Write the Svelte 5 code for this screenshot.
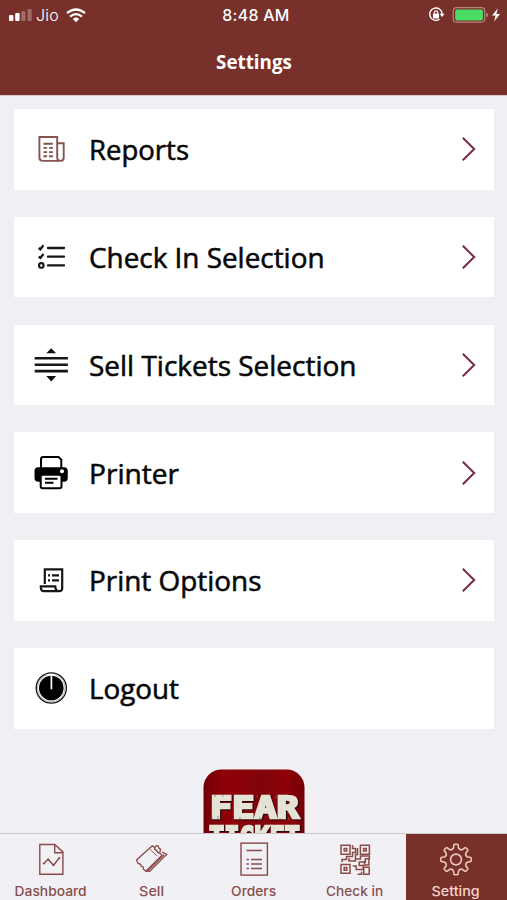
<script>
  const rows = ['Reports', 'Check In Selection', 'Sell Tickets Selection', 'Printer', 'Print Options', 'Logout'];
  const widths = [100, 235.5, 267.5, 90, 172.5, 90];
  const tabs = ['Dashboard', 'Sell', 'Orders', 'Check in', 'Setting'];
  const tabWidths = [72, 25, 45, 57, 48];

  // Eight rounded teeth around the hub of the settings gear
  const polar = (r, deg) => {
    const a = (deg * Math.PI) / 180;
    return `${(r * Math.sin(a)).toFixed(2)} ${(-r * Math.cos(a)).toFixed(2)}`;
  };
  let gear = '';
  for (let k = 0; k < 8; k++) {
    const a = k * 45;
    gear += `${k ? 'L' : 'M'}${polar(11.8, a - 12)}L${polar(14.6, a - 8.5)}Q${polar(15.3, a - 6)} ${polar(15.3, a - 4)}L${polar(15.3, a + 4)}Q${polar(15.3, a + 6)} ${polar(14.6, a + 8.5)}L${polar(11.8, a + 12)}Q${polar(9.8, a + 22.5)} ${polar(11.8, a + 33)}`;
  }
  gear += 'Z';
</script>

<main class="screen">
  <header>
    <div class="status">
      <div class="left">
        <svg class="signal" width="23" height="12" viewBox="0 0 23 12">
          <rect x="0" y="6" width="4.4" height="6" rx="1" fill="#fff" />
          <rect x="6.2" y="4" width="4.4" height="8" rx="1" fill="#fff" />
          <rect x="12.3" y="2" width="4.2" height="10" rx="1" fill="#a16b65" />
          <rect x="18.5" y="0" width="4.2" height="12" rx="1" fill="#a16b65" />
        </svg>
        <span class="carrier">Jio</span>
        <svg width="20" height="15" viewBox="0 0 20 15" fill="none" stroke="#fff" stroke-width="2.3">
          <path d="M1 5.2Q10-2.2 19 5.2" /><path d="M4 8.6Q10 3.6 16 8.6" /><path d="M6.8 11 10 14.2 13.2 11Q10 8.2 6.8 11Z" fill="#fff" stroke="none" />
        </svg>
      </div>
      <span class="time">8:48 AM</span>
      <svg class="right" width="76" height="20" viewBox="0 0 76 20">
        <path d="M12.5 14.2A6.2 6.2 0 1 1 15.1 9" fill="none" stroke="#fff" stroke-width="1.4" />
        <path d="M12.6 8.7h5l-2.5 3.4Z" fill="#fff" />
        <rect x="6" y="8.5" width="6" height="5" rx=".7" fill="#fff" /><path d="M7.2 9V7.7a1.8 1.8 0 0 1 3.6 0V9" fill="none" stroke="#fff" stroke-width="1.1" />
        <rect x="26.2" y="2.6" width="31.5" height="14.6" rx="3.2" fill="none" stroke="#b5827c" stroke-width="1.2" />
        <rect x="28.2" y="4.4" width="27.7" height="11" rx="1.6" fill="#4bdc64" />
        <path d="M59.2 7.6v5q2-1 2-2.5t-2-2.5Z" fill="#b5827c" />
        <path d="M70.8 3.4 65 10.6h3.5l-1.3 5.8L73 8.9h-3.6Z" fill="#fff" />
      </svg>
    </div>
    <div class="title">Settings</div>
  </header>

  <section class="list">
    {#each rows as row, i}
      <div class="card">
        <svg class="icon" width="36" height="36" viewBox="0 0 36 36" fill="none" stroke="#171717" stroke-width="2">
          {#if i === 0}
            <g stroke="#87534f" stroke-width="1.9">
              <path d="M6.4 6h17.8v20.6q0 3.3 3 3.3H9.8q-3.4 0-3.4-3.4ZM24.2 12.3h6.5v14.4q0 3.2-3.4 3.2" />
              <path d="M10.5 12.7h9.3M10.5 16.9h3.6M16 16.9h4M10.5 21.1h3.6M16 21.1h4M10.5 25.3h3.6M16 25.3h4" />
            </g>
          {:else if i === 1}
            <path d="M15 9h16M15 17.7h16M15 26.4h16" stroke-width="2.3" stroke-linecap="round" />
            <path d="m5.7 9 1.7 1.3 3-4M5.7 17.7l1.7 1.3 3-4" stroke-width="2.3" /><circle cx="8.3" cy="26.4" r="2.3" stroke-width="2.1" />
          {:else if i === 2}
            <path d="M1.7 11.3h33.2M1.7 17.7h33.2M1.7 24.1h33.2" stroke-width="2.6" />
            <path d="m13.3 6.3 4.9-5 4.9 5ZM13.3 29l4.9 5.4 4.9-5.4Z" fill="#111" stroke="none" />
          {:else if i === 3}
            <path d="M8 13V4.2Q8 2 10.2 2h15.3l2.8 2.6V13" stroke="#000" />
            <path d="M5 12.3h26q3.8 0 3.8 4v6.4q0 4-4 4H5.3q-3.8 0-3.8-4v-6.4q0-4 3.5-4Z" fill="#000" stroke="none" />
            <circle cx="29" cy="16.2" r="2" fill="#fff" stroke="none" />
            <rect x="7.7" y="19.7" width="20.8" height="13.6" rx="2" fill="#fff" stroke="#000" />
            <path d="M12 23.7h12.5M12 27.8h8.5" stroke="#000" />
          {:else if i === 4}
            <path d="M11.8 22V7.4h17.4v18.8q0 3-3 3H11q-3.2 0-3.2-4.8h14.5q0 4.8 4 4.8" stroke-width="2.2" />
            <path d="M15 13.3h2M19 13.3h7M15 18.3h2M19 18.3h7" stroke-width="2.3" />
          {:else}
            <circle cx="18.3" cy="18" r="15.1" stroke-width="1.3" /><circle cx="18.3" cy="18" r="12.3" fill="#000" stroke="none" />
            <path d="M14.5 4.8a13.7 13.7 0 1 0 7.6 0" stroke="#666" stroke-width=".5" />
            <path d="M18.4 4.5v14.8" stroke="#fff" stroke-width="1.7" />
          {/if}
        </svg>
        <svg class="label" width="300" height="40"><text x="1" y="30.7" textLength={widths[i]} lengthAdjust="spacingAndGlyphs">{row}</text></svg>
        {#if i < 5}
          <svg class="chevron" width="16" height="26" viewBox="0 0 16 26"><path d="m1.8 1.8 11.4 11.2L1.8 24.2" fill="none" stroke="#762c43" stroke-width="2" /></svg>
        {/if}
      </div>
    {/each}
    <svg class="logo" width="102" height="64" viewBox="0 0 102 64">
      <defs>
        <linearGradient id="red" x2="1"><stop stop-color="#720006" /><stop offset=".22" stop-color="#900008" /><stop offset=".6" stop-color="#7f040b" /><stop offset=".8" stop-color="#900008" /><stop offset="1" stop-color="#720006" /></linearGradient>
      </defs>
      <rect x=".5" y=".5" width="101" height="101" rx="18" fill="url(#red)" />
      <g class="brand">
        <text x="7" y="49" textLength="89" lengthAdjust="spacingAndGlyphs">FEAR</text>
        <text x="6" y="78.6" textLength="91" lengthAdjust="spacingAndGlyphs">TICKET</text>
      </g>
      <path d="M12 26v2m8-2v1.500m53-1v3m-19-3v2M9 48v2m6-3v3m22-2v2m20-2v3m20-2v1m9-2v3" stroke="#77705f" stroke-width=".8" />
    </svg>
  </section>

  <nav>
    {#each tabs as tab, i}
      <div class="tab" class:active={i === 4}>
        <svg width="40" height="36" viewBox="0 0 40 36" fill="none" stroke="#8a4a47" stroke-width="1.4">
          {#if i === 0}
            <path d="M8.8 2.5h14.9l8.2 7.4v22.4H8.8ZM23.7 2.500v8.2h8.2M12.8 21.5l4.3-4.3 5.4 6.1 6-7.7" />
            <g fill="#8a4a47" stroke="none"><circle cx="12.8" cy="21.5" r="1.1" /><circle cx="17.1" cy="17.5" r="1.1" /><circle cx="22.5" cy="23" r="1.1" /><circle cx="28.3" cy="16" r="1.1" /></g>
          {:else if i === 1}
            <g stroke-width="1.3" stroke-linejoin="round">
              <path d="M4.5 18 20.3 3.8l2.3 1.7q-.3 2.5 2.1 2.8.7 2.7 3.1 2.8l2.2 2.1L13.9 29.2l-2.6-2.3q.7-2.4-2.1-2.6-.2-2.8-3-2.6Z" />
              <path d="m22.6 5.5 1.8-1.9 2 .6q-.3 2.5 2.3 2.9l-1.2 3.8M29.8 10l4.9 2.4-17 16.9-3.8-.1M16 28.6 32 12.7" /><path d="m18.2 7.5 7 6.6" stroke-width=".9" />
            </g>
          {:else if i === 2}
            <rect x="7" y="1.1" width="26.4" height="32" /><path d="M12.5 8.5h15.5M12.5 17.6h2.4M17 17.6h11M12.5 22h2.4M17 22h11M12.5 26.4h2.4M17 26.4h11" stroke-width="1.5" />
          {:else if i === 3}
            <path d="M6 3.3h9v8.9H6ZM25.4 3.3h9v8.9h-9ZM6 22.4h9v8.9H6ZM9.2 6.4h2.6v2.7H9.2ZM28.6 6.4h2.6v2.7h-2.6ZM9.2 25.5h2.6v2.7H9.2ZM17.5 3v3.5h3v4h-3v4h-6v3H7v2.5M22.5 6v6.5h-2v6.5H14v-3m6.5 1h5v-3h8.9v2.8h-4v3.2h-6.2v3.5h4v4h-7v-3.5h-3.4m16.1-7.8v6.7h-4.4v-4.5m-1 6.8h5.7v7.1h-5.5v-7.1m-2.1 4.5v2.6h-4" stroke-width="1.5" />
          {:else}
            <g stroke="#efc5b9" stroke-width="1.6" transform="translate(20 17.5)" stroke-linejoin="round">
              <circle r="5.4" />
              <path d={gear} />
            </g>
          {/if}
        </svg>
        <svg class="tab-label" width="100" height="18"><text x="49.6" y="13.5" text-anchor="middle" textLength={tabWidths[i]} lengthAdjust="spacingAndGlyphs">{tab}</text></svg>
      </div>
    {/each}
  </nav>
</main>

<style>
  :global(body) { margin: 0; }
  .screen { width: 507px; height: 900px; display: flex; flex-direction: column; overflow: hidden; background: #efeff4; font-family: Inter, sans-serif; }
  svg { display: block; flex: none; }
  header { height: 96px; flex: none; background: #78302b; border-bottom: 1px solid #ddc7c5; box-sizing: border-box; }
  .status { height: 30px; display: grid; grid-template-columns: 1fr auto 1fr; align-items: center; color: #fff; }
  .left { display: flex; align-items: center; padding-left: 9px; }
  .signal { margin-right: 4px; }
  .carrier { width: 30px; font-size: 16px; font-weight: 300; letter-spacing: .2px; }
  .time { font-size: 15.9px; font-weight: 500; letter-spacing: .3px; margin-left: 6px; margin-right: 1px; }
  .right { justify-self: end; margin-right: 4px; margin-top: -1px; }
  .title { height: 28px; margin-top: 18px; padding-left: 1px; text-align: center; color: #fff; font: 700 18.8px/28px "Open Sans", sans-serif; }
  .list { flex: 1; min-height: 0; padding: 13px 14px 0; display: flex; flex-direction: column; overflow: hidden; gap: 27.2px; }
  .card { height: 80.6px; flex: none; box-sizing: border-box; width: 479.5px; background: #fff; display: flex; align-items: center; padding: 0 17px 0 19px; }
  .label { margin-left: 19px; overflow: visible; }
  .label text { font: 400 26.8px "Open Sans", sans-serif; fill: #080808; stroke: #080808; stroke-width: .55; }
  .chevron { margin-left: auto; }
  .logo { align-self: center; margin: 13.5px 0 0 1px; }
  .brand text { font: 700 31px "DejaVu Sans Mono", monospace; fill: #e5e3d5; stroke: #e5e3d5; stroke-width: 2.4; filter: drop-shadow(1px 1px 0 #260406); }
  nav { height: 67px; flex: none; box-sizing: border-box; border-top: 1px solid #c9c8cb; display: flex; background: #f1f0f4; }
  .tab { flex: 1; display: flex; flex-direction: column; align-items: center; padding-top: 8px; color: #874f4c; }
  .tab-label { margin-top: 4px; }
  .tab-label text { font: 500 13.2px Inter, sans-serif; fill: currentColor; }
  .active { background: #78302b; color: #f4d5cc; }
</style>
